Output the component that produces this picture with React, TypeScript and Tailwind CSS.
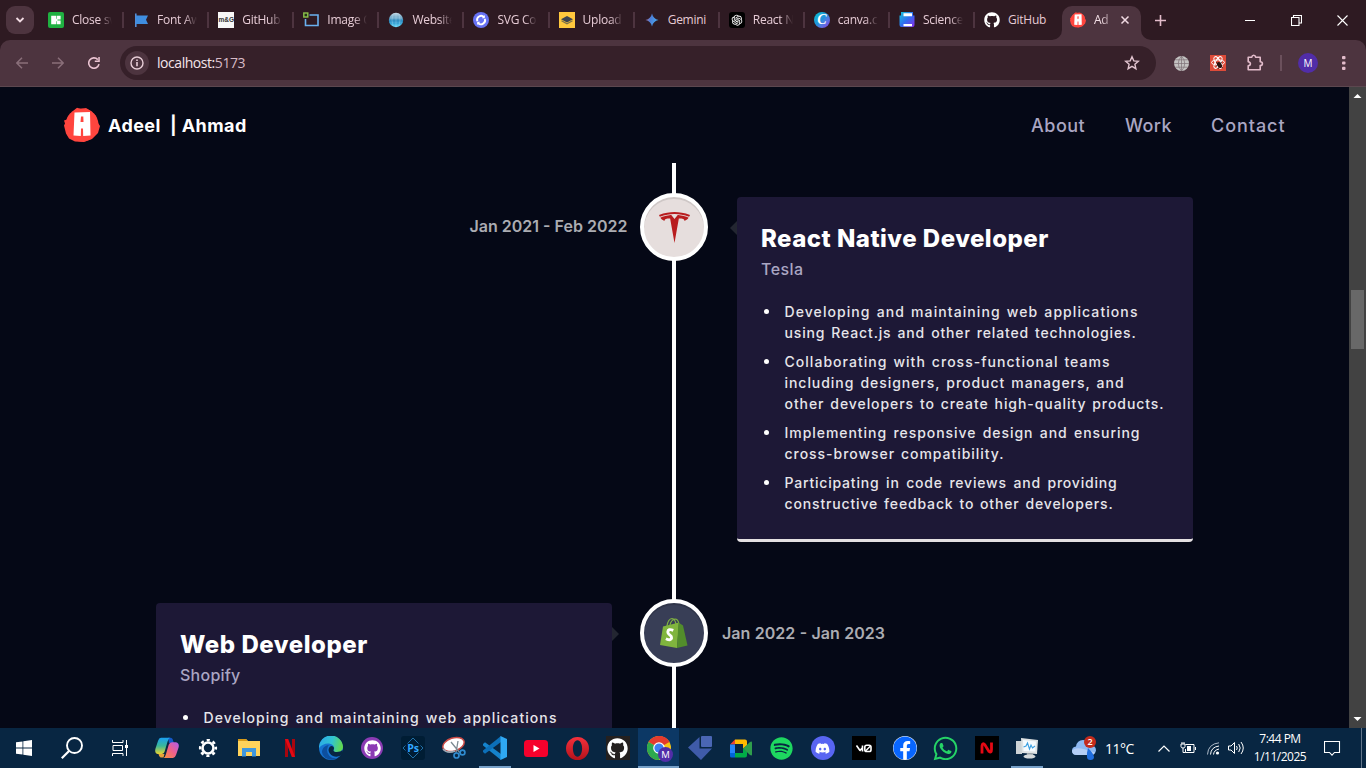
import React from "react";
import { FaGithub, FaSpotify, FaDiscord, FaWhatsapp, FaFacebook, FaYoutube } from "react-icons/fa";
import { AiOutlineOpenAI } from "react-icons/ai";
import { SiTesla } from "react-icons/si";

const AvatarLogo = ({ size }: { size: number }) => (
  <svg className="shrink-0" width={size} height={size} viewBox="0 0 36 36">
    <circle cx="18" cy="18" r="16.500" fill="#ff453e" />
    <path d="M9 4l4-3.300 4 1.300 5-1 5 3 5 5 2 7 2 3-2 7-6 6-8 3-9-.5-6-3-3-5-2-8 1-2-1-3 3-1 1-3z" fill="#ff453e" />
    <path fillRule="evenodd" d="M10.500 5.500L26 5 26.500 28.500 19.200 29 19 21.500 17 21.500 16.800 29 9.500 28.500zM17 9.500L16.500 15 19.500 15 19.300 9.500z" fill="#fff" />
  </svg>
);

const favicons = {
  icons8: (
    <svg width="16" height="16" viewBox="0 0 16 16">
      <rect width="16" height="16" rx="2" fill="#1fb141" />
      <path d="M3.200 3.700h4.800v8.600H3.200zM8.600 3.700h4v3.900h-4zM8.600 8.400h4v3.900h-4z" fill="#fff" />
      <path d="M8 6.800h1.500v2.400H8z" fill="#fff" />
    </svg>
  ),
  flag: (
    <svg width="16" height="16" viewBox="0 0 16 16">
      <path d="M2.800 1.500v13.500" stroke="#538dd7" strokeWidth="1.600" />
      <path d="M3 3.500h12l-2 4.300 2 4.200H3z" fill="#3f8ee0" />
    </svg>
  ),
  mg: (
    <span className="flex h-4 w-4 items-center justify-center bg-[#f7f7f7] font-['Liberation_Sans'] text-[6.500px] font-bold text-[#333]">m&amp;G</span>
  ),
  image: (
    <svg width="16" height="16" viewBox="0 0 16 16">
      <path d="M6.500 3h8.500v10.500H2.500V7" fill="none" stroke="#69b1f0" strokeWidth="1.600" />
      <rect x=".8" y="1" width="4" height="4" fill="#28341c" stroke="#8bc34a" strokeWidth="1.400" />
    </svg>
  ),
  globe: (
    <svg width="16" height="16" viewBox="0 0 16 16">
      <defs>
        <linearGradient id="orb" x1="0" x2="0" y1="0" y2="1">
          <stop offset="0" stopColor="#c5d6e2" />
          <stop offset=".4" stopColor="#5fa0c4" />
          <stop offset=".6" stopColor="#1c86c0" />
          <stop offset="1" stopColor="#6fe0ff" />
        </linearGradient>
      </defs>
      <circle cx="8" cy="8" r="7.200" fill="url(#orb)" />
      <path d="M2 6h12M1.500 10h13M8 1v14M5 2q-2 6 0 12M11 2q2 6 0 12" stroke="#bfeaff" strokeWidth=".3" fill="none" />
    </svg>
  ),
  svgc: (
    <svg width="16" height="16" viewBox="0 0 16 16">
      <circle cx="8" cy="8" r="8" fill="#6772f4" />
      <path d="M4.300 9.200A4 4 0 0 1 11 5.200M11.800 6.800A4 4 0 0 1 5 10.800" fill="none" stroke="#fff" strokeWidth="1.900" />
      <path d="M11.800 3v3.200H8.800zM4.200 13V9.800h3z" fill="#fff" />
    </svg>
  ),
  upload: (
    <svg width="16" height="16" viewBox="0 0 16 16">
      <rect width="16" height="16" fill="#ffc83d" />
      <path d="M8 4l6 3.200L8 10.400 2 7.200z" fill="#3c4450" />
      <path d="M2.500 8.700L8 11.800l5.500-3.100" fill="none" stroke="#7d7148" strokeWidth="1.200" />
    </svg>
  ),
  gemini: (
    <svg width="16" height="16" viewBox="0 0 16 16">
      <defs>
        <linearGradient id="gem" x1="0" x2="1" y1=".3" y2=".6">
          <stop offset="0" stopColor="#b0719a" />
          <stop offset=".4" stopColor="#4b7fd8" />
          <stop offset="1" stopColor="#46b0f2" />
        </linearGradient>
      </defs>
      <path d="M8 1.500C8.800 5 11 7.200 14.500 8 11 8.800 8.800 11 8 14.500 7.200 11 5 8.800 1.500 8 5 7.200 7.200 5 8 1.500z" fill="url(#gem)" />
    </svg>
  ),
  openai: (
    <span className="flex h-4 w-4 items-center justify-center rounded-[3px] bg-black text-white">
      <AiOutlineOpenAI size={14} />
    </span>
  ),
  canva: (
    <span className="flex h-4 w-4 items-center justify-center rounded-full bg-linear-to-br from-[#00c4cc] via-[#2390dc] to-[#7d2ae8] pb-px font-['Liberation_Serif'] text-[14px] leading-none font-bold text-white italic">C</span>
  ),
  science: (
    <svg width="16" height="16" viewBox="0 0 16 16">
      <defs>
        <linearGradient id="sci" x1="0" x2="1" y1="0" y2="1">
          <stop offset="0" stopColor="#16c8d8" />
          <stop offset=".5" stopColor="#2d6ff0" />
          <stop offset="1" stopColor="#8a2be8" />
        </linearGradient>
      </defs>
      <path d="M2 0h12v3.500h1.500v9.500q0 2-2 2H2.500Q.5 15 .5 13V3.500H2z" fill="url(#sci)" />
      <path d="M4.500 1.200h8.500v3H4.500zM4.500 12h8.500v2.300H4.500z" fill="#fff" />
    </svg>
  ),
  github: <FaGithub size={16} color="#fff" />,
};

const tabs: [React.ReactNode, string][] = [
  [favicons.icons8, "Close sv"],
  [favicons.flag, "Font Aw"],
  [favicons.mg, "GitHub"],
  [favicons.image, "Image C"],
  [favicons.globe, "Website"],
  [favicons.svgc, "SVG Con"],
  [favicons.upload, "Upload"],
  [favicons.gemini, "Gemini"],
  [favicons.openai, "React N"],
  [favicons.canva, "canva.c"],
  [favicons.science, "Science"],
  [favicons.github, "GitHub"],
];

function TabStrip() {
  return (
    <div className="flex h-10 items-start bg-[#2e1a22]">
      <div className="mt-1.5 ml-1.5 flex h-7 w-7 items-center justify-center rounded-[9px] bg-[#4d343f]">
        <svg width="10" height="10" viewBox="0 0 10 10">
          <path d="M1.500 3l3.500 3.500L8.500 3" fill="none" stroke="#f1dbe3" strokeWidth="1.800" />
        </svg>
      </div>
      <div className="ml-[5px] flex">
        {tabs.map(([icon, label], i) => (
          <div key={i} className="flex h-10 w-[85.100px] items-center pl-[9px]">
            <span className="h-4 w-4 shrink-0">{icon}</span>
            <span
              className={
                "ml-[8px] w-[40px] shrink-0 overflow-hidden text-[12px] tracking-[-0.250px] whitespace-nowrap text-[#e6cbd5] " +
                (label === "Gemini" || i === 11 ? "" : "[mask-image:linear-gradient(to_right,#000_68%,transparent_100%)]")
              }
            >
              {label}
            </span>
            {i < 11 && <span className="ml-auto h-4 w-[2px] bg-[#4d343f]" />}
          </div>
        ))}
      </div>
      <div className="relative mt-1.5 ml-[1.800px] flex h-[34px] w-[79px] items-center rounded-t-[10px] bg-[#4d343f] pb-1.5 pl-2">
        <svg className="absolute bottom-0 -left-[10px]" width="10" height="10"><path d="M10 0v10H0A10 10 0 0 0 10 0" fill="#4d343f" /></svg>
        <svg className="absolute -right-[10px] bottom-0" width="10" height="10"><path d="M0 0v10h10A10 10 0 0 1 0 0" fill="#4d343f" /></svg>
        <AvatarLogo size={16} />
        <span className="ml-2 w-4 overflow-hidden text-[12px] tracking-[-0.200px] text-[#f3dfe6] [mask-image:linear-gradient(to_right,#000_40%,#0006_100%)]">Ad</span>
        <svg className="ml-[10px]" width="10" height="10" viewBox="0 0 10 10"><path d="M1.500 1.500l7 7M8.500 1.500l-7 7" stroke="#f1dbe3" strokeWidth="1.500" /></svg>
      </div>
      <svg className="mt-[15px] ml-[14px]" width="11" height="11" viewBox="0 0 11 11"><path d="M5.500 0v11M0 5.500h11" stroke="#e3bccb" strokeWidth="1.600" /></svg>
      <div className="mt-[15px] ml-auto flex items-center gap-[35px] pr-[18px]">
        <svg width="11" height="11"><path d="M0 5.500h10" stroke="#fff" /></svg>
        <svg width="11" height="11"><path d="M.5 2.500h7.500v8H.5zM2.500 2.500v-2h8v7.500H8" fill="none" stroke="#fff" strokeWidth="1.100" /></svg>
        <svg width="11" height="11"><path d="M.5.5l10 10M10.500.5l-10 10" stroke="#fff" strokeWidth="1.100" /></svg>
      </div>
    </div>
  );
}

function Toolbar() {
  return (
    <div className="bg-[#2e1a22]">
      <div className="flex h-[47px] items-center rounded-t-[10px] border-b border-[#5c474f] bg-[#4d343f] pl-4">
        <svg width="12" height="12" viewBox="0 0 12 12"><path d="M12 6H1M6 .8L.8 6 6 11.200" fill="none" stroke="#8a6f7a" strokeWidth="1.500" /></svg>
        <svg className="ml-6" width="12" height="12" viewBox="0 0 12 12"><path d="M0 6h11M6 .8L11.200 6 6 11.200" fill="none" stroke="#8a6f7a" strokeWidth="1.500" /></svg>
        <svg className="ml-6" width="12" height="12" viewBox="0 0 12 12">
          <path d="M11 7.200A5.200 5.200 0 1 1 9.800 2.600" fill="none" stroke="#ebc4d2" strokeWidth="1.600" />
          <path d="M11.800 0v5H6.800V3.600h3.500V0z" fill="#ebc4d2" />
        </svg>
        <div className="ml-5 flex h-[34px] w-[1036px] items-center rounded-full bg-[#362029] pl-[5px]">
          <span className="flex h-6 w-6 items-center justify-center rounded-full bg-[#4d343f]">
            <svg width="14" height="14" viewBox="0 0 14 14">
              <circle cx="7" cy="7" r="6" fill="none" stroke="#e8ced7" strokeWidth="1.400" />
              <path d="M7 6v4.200M7 3.500v1.500" stroke="#e8ced7" strokeWidth="1.600" />
            </svg>
          </span>
          <span className="ml-2 pb-px text-[14px] tracking-[-0.450px] text-[#f4e4ea]">
            localhost:<span className="text-[#d7bbc6]">5173</span>
          </span>
          <svg className="mr-4 ml-auto" width="16" height="16" viewBox="0 0 16 16">
            <path d="M8 1.800l1.800 4.100 4.500.400-3.400 3 1 4.400L8 11.400l-3.900 2.300 1-4.400-3.400-3 4.500-.4z" fill="none" stroke="#e3c5d0" strokeWidth="1.400" />
          </svg>
        </div>
        <svg className="ml-[17px]" width="17" height="17" viewBox="0 0 17 17">
          <circle cx="8.500" cy="8.500" r="7.500" fill="#c4c3c2" />
          <path d="M1 8.500h15M2.500 4.800h12M2.500 12.200h12M8.500 1v15M8.500 1q-6.500 7.500 0 15M8.500 1q6.500 7.500 0 15" stroke="#7c7075" strokeWidth=".7" fill="none" />
        </svg>
        <svg className="ml-5" width="16" height="16" viewBox="0 0 16 16">
          <rect width="16" height="16" fill="#dd4b39" />
          <g fill="none" stroke="#fff" strokeWidth="1">
            <ellipse cx="8" cy="7.500" rx="6.500" ry="2.600" />
            <ellipse cx="8" cy="7.500" rx="6.500" ry="2.600" transform="rotate(60 8 7.500)" />
            <ellipse cx="8" cy="7.500" rx="6.500" ry="2.600" transform="rotate(120 8 7.500)" />
          </g>
          <ellipse cx="9.500" cy="10" rx="2.200" ry="3.200" fill="#2a1210" transform="rotate(-30 9.500 10)" />
          <path d="M6 7l7 6M6 11l6-4M8 14l3-6" stroke="#2a1210" strokeWidth=".7" />
        </svg>
        <svg className="ml-5" width="19" height="18" viewBox="0 0 19 18">
          <path d="M2.200 3.200h3.600q.2-1.900 1.900-1.900t1.900 1.900h4.600v4.600q2.200.2 2.200 1.900t-2.200 1.900v4.200H2.200v-4q2.200-.3 2.200-2t-2.200-2z" fill="none" stroke="#e3bccb" strokeWidth="1.600" strokeLinejoin="round" />
        </svg>
        <span className="ml-[15px] h-4 w-[2px] bg-[#6b505c]" />
        <span className="ml-4 flex h-5 w-5 items-center justify-center rounded-full bg-[#512da8] font-['Open_Sans'] text-[10px] text-white">M</span>
        <svg className="ml-6" width="4" height="16" viewBox="0 0 4 16"><g fill="#e3bccb"><rect y="1" width="3.500" height="3.200" rx="1" /><rect y="6.400" width="3.500" height="3.200" rx="1" /><rect y="11.800" width="3.500" height="3.200" rx="1" /></g></svg>
      </div>
    </div>
  );
}

const bulletLines: [string, string][][] = [
  [
    ["Developing and maintaining web applications", "w-[354px] tracking-[1.080px]"],
    ["using React.js and other related technologies.", "w-[352px] tracking-[0.850px]"],
  ],
  [
    ["Collaborating with cross-functional teams", "w-[326px] tracking-[1.030px]"],
    ["including designers, product managers, and", "w-[340px] tracking-[0.950px]"],
    ["other developers to create high-quality products.", "w-[380px] tracking-[0.930px]"],
  ],
  [
    ["Implementing responsive design and ensuring", "w-[356px] tracking-[0.950px]"],
    ["cross-browser compatibility.", "w-[220px] tracking-[0.970px]"],
  ],
  [
    ["Participating in code reviews and providing", "w-[333px] tracking-[0.800px]"],
    ["constructive feedback to other developers.", "w-[329px] tracking-[0.850px]"],
  ],
];

function Card({ title, titleClass, company, companyClass, arrow }: { title: string; titleClass: string; company: string; companyClass: string; arrow: "left" | "right" }) {
  return (
    <div className="relative mt-1 h-[345px] w-[456px] shrink-0 rounded-[4px] border-b-[3px] border-[#e4e0e2] bg-[#1d1836] px-6 pt-6">
      {arrow === "left" ? (
        <span className="absolute top-6 -left-[7px] h-0 w-0 border-y-[7px] border-r-[7px] border-y-transparent border-r-[#232631]" />
      ) : (
        <span className="absolute top-6 -right-[7px] h-0 w-0 border-y-[7px] border-l-[7px] border-y-transparent border-l-[#232631]" />
      )}
      <h3 className={"text-[24px] leading-9 font-extrabold whitespace-nowrap text-white " + titleClass}>{title}</h3>
      <p className={"text-[16px] leading-6 font-medium text-[#aaa6c3] " + companyClass}>{company}</p>
      <ul className="mt-5 flex flex-col gap-2">
        {bulletLines.map((lines, i) => (
          <li key={i} className="flex">
            <span className="mt-[8px] ml-[3px] h-[5px] w-[5px] shrink-0 rounded-full bg-white" />
            <div className="ml-[15.500px] text-[14px] leading-[21px] font-medium text-[#e6e5ea]">
              {lines.map(([text, fit]) => (
                <p key={text} className={"whitespace-nowrap [text-align-last:justify] " + fit}>{text}</p>
              ))}
            </div>
          </li>
        ))}
      </ul>
    </div>
  );
}

const ShopifyBag = () => (
  <svg width="28" height="32" viewBox="0 0 28 32">
    <path d="M7 9Q8 2 12 1.500q3 0 4 6M10 8q1-5 5-6 3 0 4 5" fill="none" stroke="#7fb241" strokeWidth="1.200" />
    <path d="M3 9.500L19 5.500 17 31 0 28z" fill="#80b53e" />
    <path d="M18.500 5.500l4.500 3L27.500 28.500 17 31z" fill="#528d2b" />
    <path d="M13.300 13.300q-5.300-2-5.500 1.800 0 1.800 2 3t1.800 3q-.5 3-5.700.600" fill="none" stroke="#fff" strokeWidth="2.900" />
  </svg>
);

function Page() {
  return (
    <div className="flex h-[641px] bg-[#050816] font-['Inter',sans-serif]">
      <main className="w-[1349px] overflow-hidden">
        <nav className="flex h-[76px] items-center pr-16 pl-16">
          <AvatarLogo size={36} />
          <span className="ml-2 w-[145px] text-[18px] font-bold tracking-[0.400px] whitespace-pre text-white">Adeel&nbsp; | Ahmad</span>
          <ul className="ml-auto flex gap-10 text-[18px] font-medium text-[#aaa6c3]">
            <li className="w-[54px] tracking-[0.500px]">About</li>
            <li className="w-[46px] tracking-[0.400px]">Work</li>
            <li className="w-[74px] tracking-[0.950px]">Contact</li>
          </ul>
        </nav>
        <section className="relative flex h-[565px] flex-col pt-[30px]">
          <span className="absolute top-0 left-[672px] h-full w-1 bg-white" />
          <div className="flex h-[406px] items-start">
            <p className="flex h-[66px] w-[627px] items-center justify-end text-[16px] font-semibold text-[#abacb2]"><span className="w-[157.500px] whitespace-nowrap [text-align-last:justify]">Jan 2021 - Feb 2022</span></p>
            <span className="relative ml-[13px] flex h-[68px] w-[68px] shrink-0 items-center justify-center rounded-full border-4 border-white bg-[#e6dedd] text-[#b81c1e] shadow-[inset_0_2px_0_#0000001a]">
              <SiTesla size={31} />
            </span>
            <div className="ml-[29px]">
              <Card title="React Native Developer" titleClass="tracking-[0.480px]" company="Tesla" companyClass="tracking-[0.450px]" arrow="left" />
            </div>
          </div>
          <div className="flex h-[129px] items-start overflow-hidden pl-[156px]">
            <Card title="Web Developer" titleClass="tracking-[0.550px]" company="Shopify" companyClass="tracking-[0.250px]" arrow="right" />
            <span className="relative ml-7 flex h-[68px] w-[68px] shrink-0 items-center justify-center rounded-full border-4 border-white bg-[#383e56] shadow-[inset_0_2px_0_#00000026]">
              <ShopifyBag />
            </span>
            <p className="ml-3.5 flex h-[68px] items-center text-[16px] font-semibold text-[#abacb2]"><span className="w-[163px] whitespace-nowrap [text-align-last:justify]">Jan 2022 - Jan 2023</span></p>
          </div>
        </section>
      </main>
      <div className="flex w-[17px] flex-col items-center bg-[#424242]">
        <svg width="17" height="17"><path d="M4.500 11h8l-4-4z" fill="#fff" /></svg>
        <span className="mt-[186px] h-[59px] w-[13px] bg-[#686868]" />
        <svg className="mt-auto" width="17" height="17"><path d="M4.500 6h8l-4 4z" fill="#fff" /></svg>
      </div>
    </div>
  );
}

const Chrome = () => (
  <svg width="28" height="28" viewBox="0 0 28 28">
    <circle cx="12" cy="12" r="12" fill="#f5c518" />
    <path d="M12 12L1.600 6A12 12 0 0 1 22.400 6z" fill="#e33b2e" />
    <path d="M12 0A12 12 0 0 1 22.400 6H12z" fill="#e33b2e" />
    <path d="M1.600 6A12 12 0 0 0 12 24l5.200-9L12 12z" fill="#2da94f" />
    <circle cx="12" cy="12" r="5.800" fill="#fff" />
    <circle cx="12" cy="12" r="4.600" fill="#3d7ff0" />
    <circle cx="18.500" cy="18.500" r="7.500" fill="#512da8" />
    <text x="18.500" y="22" textAnchor="middle" fontSize="9.500" fill="#fff" fontFamily="Open Sans">M</text>
  </svg>
);

const apps: React.ReactNode[] = [
  <svg width="24" height="22" viewBox="0 0 24 22">
    <defs>
      <linearGradient id="cpa" x1="0" x2="0" y1="0" y2="1"><stop offset="0" stopColor="#1a9ff0" /><stop offset=".5" stopColor="#3ab89a" /><stop offset="1" stopColor="#e8d431" /></linearGradient>
      <linearGradient id="cpb" x1="1" x2="0" y1="0" y2="1"><stop offset="0" stopColor="#b05cf0" /><stop offset=".5" stopColor="#f0608a" /><stop offset="1" stopColor="#f8913a" /></linearGradient>
    </defs>
    <path d="M13 .8h2.500q2 0 2.700 3.200l.8 2h-5z" fill="#1558c8" />
    <path d="M5.500 20.500q-1.500-.5-2-3.500h6l-1 3.500z" fill="#e8a13a" />
    <path d="M6 .8h9q-1.700 1-2.500 4L9.800 14q-.8 3-3.300 3H3Q-.8 16.500 .5 11.500L3 4Q4 .8 6 .8z" fill="url(#cpa)" />
    <path d="M18 21H8.500q1.700-1 2.500-4l2.700-9.200q.8-2.600 3.300-2.600H21q3.800 1 2.500 5.500L21 18q-1 3-3 3z" fill="url(#cpb)" />
  </svg>,
  <svg width="20" height="20" viewBox="0 0 20 20">
    <circle cx="10" cy="10" r="5.500" fill="none" stroke="#fff" strokeWidth="2.600" />
    <circle cx="10" cy="10" r="7.900" fill="none" stroke="#fff" strokeWidth="2.400" strokeDasharray="3.100 3.104" strokeDashoffset="1.550" />
  </svg>,
  <svg width="22" height="20" viewBox="0 0 22 20">
    <path d="M0 1h8l2 2h12v15H0z" fill="#ffd35b" /><path d="M0 1h8l1.500 2H0z" fill="#d99b18" />
    <path d="M4 10h14v8.500h-4V14H8v4.500H4z" fill="#3f97dd" />
  </svg>,
  <svg width="10" height="18" viewBox="0 0 10 18"><path d="M0 0h3v18H0zM7 0h3v18H7z" fill="#a8060f" /><path d="M0 0h3.200L10 18H6.800z" fill="#e50914" /></svg>,
  <svg width="24" height="24" viewBox="0 0 24 24">
    <defs>
      <linearGradient id="eda" x1="0" x2="1" y1=".2" y2=".4"><stop offset="0" stopColor="#2ba9e8" /><stop offset=".55" stopColor="#31c4d0" /><stop offset="1" stopColor="#62d94e" /></linearGradient>
    </defs>
    <circle cx="12" cy="12" r="12" fill="#1673d0" />
    <path d="M0 12A12 12 0 0 1 24 11q0 5-6 5-4 0-3.500-2 1-1 .5-3-1-3-5-3.500Q4 7 0 12z" fill="url(#eda)" />
    <path d="M8.500 12q-1.500 4 2 8 3 3 8 2-6 3.500-12 0-5-4-3-8.500Q5 9.500 10 9q-1.500 1-1.500 3z" fill="#0d4f9e" />
    <path d="M14.500 14q-.5 2 3.500 2 4 0 5.500-2l.5 3-2 2.500q-4 2-8 .5-4-2-4.500-6 .5-4 3.500-4 3 1 1.500 4z" fill="#082642" />
  </svg>,
  <span className="flex h-[22px] w-[22px] items-center justify-center rounded-full bg-[#8b3bb4]"><FaGithub size={17} color="#fff" /></span>,
  <svg width="24" height="24" viewBox="0 0 24 24">
    <rect width="24" height="24" rx="3" fill="#001d34" />
    <path d="M12 2l10 10-10 10L2 12z" fill="none" stroke="#2070a8" strokeWidth="1" />
    <path d="M4.500 7.500h15v9h-15z" fill="#001d34" />
    <text x="12.200" y="16" textAnchor="middle" fontSize="10.500" fontWeight="700" fill="#31a8ff" fontFamily="Open Sans">Ps</text>
  </svg>,
  <svg width="24" height="24" viewBox="0 0 24 24">
    <ellipse cx="11.500" cy="8.500" rx="11" ry="6.500" transform="rotate(-18 11.500 8.500)" fill="#fff" stroke="#c94a45" strokeWidth="1.500" />
    <path d="M1 13q4 5 12 2" stroke="#9aa8b4" strokeWidth="1.500" fill="none" />
    <path d="M9 6l9 11M16 5l-2 12" stroke="#7d8a92" strokeWidth="1.300" />
    <circle cx="14.500" cy="19.500" r="2.500" fill="none" stroke="#2f8bd0" strokeWidth="1.700" /><circle cx="20.500" cy="16.500" r="2.400" fill="none" stroke="#2f8bd0" strokeWidth="1.700" />
  </svg>,
  <svg width="24" height="24" viewBox="0 0 24 24">
    <path d="M0 8l2-1.700L18 18v6L0 9.500z" fill="#1583cc" />
    <path d="M0 16l2 1.700L18 6V0L0 14.500z" fill="#0c6fb8" />
    <path d="M17.500 0L24 3v18l-6.500 3z" fill="#2fa8f2" />
  </svg>,
  <svg width="24" height="17" viewBox="0 0 24 17"><rect width="24" height="17" rx="3.500" fill="#f6012c" /><path d="M9.500 5v7l6-3.500z" fill="#fff" /></svg>,
  <svg width="23" height="23" viewBox="0 0 24 24">
    <defs><linearGradient id="opr" x1="0" x2="0" y1="0" y2="1"><stop offset="0" stopColor="#f5313c" /><stop offset="1" stopColor="#b3121b" /></linearGradient></defs>
    <path fillRule="evenodd" d="M12 0a12 12 0 1 0 0 24 12 12 0 1 0 0-24zM12 3.500c3 0 4.800 4 4.800 8.500S15 20.500 12 20.500 7.200 16.500 7.200 12 9 3.500 12 3.500z" fill="url(#opr)" />
  </svg>,
  <span className="flex h-6 w-6 items-center justify-center bg-[#24201f]"><FaGithub size={21} color="#fff" /></span>,
  <span className="mt-1 ml-1"><Chrome /></span>,
  <svg width="24" height="24" viewBox="0 0 24 24"><path d="M11.500 1v11.500H24L13 24 0 11.500z" fill="#3f5ba9" /><rect x="13" y="0" width="11" height="11" rx="1" fill="#4a66b4" /></svg>,
  <svg width="22" height="19" viewBox="0 0 22 19">
    <path d="M5 .5h10q2 0 2 2v4l-4 3V5H5z" fill="#ffba00" /><path d="M5 .5V5.500H0z" fill="#ea4335" />
    <path d="M0 5.500h5v8.500H0z" fill="#2684fc" /><path d="M0 14h5v4.500H1.500Q0 18.500 0 17z" fill="#0066da" />
    <path d="M5 14h8V9.500l4 3V16.500q0 2-2 2H5z" fill="#00ac47" /><path d="M13 9.500L20 3q2-1 2 .5v12q0 1.500-2 .5z" fill="#2f9e4c" />
  </svg>,
  <FaSpotify size={23} color="#1ed760" />,
  <span className="flex h-6 w-6 items-center justify-center rounded-full bg-[#5865f2]"><FaDiscord size={15} color="#fff" /></span>,
  <span className="flex h-6 w-6 items-center justify-center bg-black">
    <svg width="16" height="9" viewBox="0 0 16 9"><path d="M.5 1.500L4 6.500M3.600 7l3-3.500M6.500 1.500v6" fill="none" stroke="#fff" strokeWidth="1.600" /><rect x="8.800" y="1.300" width="6.200" height="6.200" rx="1.800" fill="none" stroke="#fff" strokeWidth="1.600" /><path d="M9.500 7l5-5" stroke="#fff" strokeWidth="1.400" /></svg>
  </span>,
  <span className="flex h-6 w-6 items-center justify-center rounded-full bg-white"><FaFacebook size={24} color="#0866ff" /></span>,
  <FaWhatsapp size={27} color="#25d366" />,
  <span className="flex h-6 w-6 items-center justify-center bg-black">
    <svg width="14" height="14" viewBox="0 0 14 14"><path d="M2 12.500V5q.5-4 3-1l4 6.500q2.500 2 2.500-2V1.500" fill="none" stroke="#e50914" strokeWidth="2.800" /></svg>
  </span>,
  <svg width="24" height="22" viewBox="0 0 24 22">
    <path d="M1 4h6v13H1z" fill="#cdd3d6" /><path d="M6 1l17 2-1 14-15-1z" fill="#dfe3e4" /><path d="M8 3l13 1.500-.8 10L8.500 14z" fill="#f6fbff" />
    <path d="M8.500 10l2.500-1 1.500-3 2 6 1.500-4 1.500 3 2.500-2" fill="none" stroke="#3b9fe0" strokeWidth="1.100" />
    <path d="M12 16l6 .5.500 2.500h-7z" fill="#a4acb0" /><ellipse cx="14.500" cy="19.500" rx="6" ry="2" fill="#d5dadc" />
  </svg>,
];

function Taskbar() {
  return (
    <div className="flex h-10 items-center overflow-hidden bg-[#082642] text-white">
      <svg className="ml-4 shrink-0" width="16" height="16" viewBox="0 0 16 16"><path d="M0 2.300L6.500 1.400v6.200H0zM7.300 1.300L16 0v7.600H7.300zM0 8.400h6.500v6.200L0 13.700zM7.300 8.400H16V16l-8.700-1.300z" fill="#fff" /></svg>
      <svg className="ml-[29px] shrink-0" width="22" height="22" viewBox="0 0 22 22"><circle cx="13.500" cy="8.500" r="7.500" fill="none" stroke="#fff" strokeWidth="1.900" /><path d="M8 14L.8 21.200" stroke="#fff" strokeWidth="2.200" /></svg>
      <svg className="ml-[29px] shrink-0" width="17" height="16" viewBox="0 0 17 16"><path d="M.5 0v2.500h10.500V0M.5 16v-2.500h10.500V16M1 5.500h9.500v5H1zM14.500 0v16" fill="none" stroke="#fff" /><path d="M13 5h3v3h-3z" fill="#fff" /></svg>
      <div className="ml-[18px] flex h-10 shrink-0">
        {apps.map((icon, i) => (
          <div key={i} className={"relative flex h-10 w-[40.960px] shrink-0 items-center justify-center " + (i === 12 ? "bg-[#0c3865]" : "")}>
            {icon}
            {(i === 8 || i === 21) && <span className="absolute bottom-0 h-[2px] w-8 bg-[#76a0c8]" />}
            {i === 12 && <span className="absolute bottom-0 h-[2px] w-full bg-[#76a0c8]" />}
          </div>
        ))}
      </div>
      <svg className="ml-[24px] shrink-0" width="25" height="25" viewBox="0 0 25 25">
        <path d="M5 19Q0 19 0 14.500 0 11 4 10.500 5 4 11 4q5 0 6.500 5Q24 9 24 14.500 23 19 19 19z" fill="#8db8f2" />
        <path d="M5 19Q0 19 0 14.500q3-3 9-2t14 4Q22 19 19 19z" fill="#b4cef6" />
        <path d="M16 12q6 6 6 9 0 3-3.500 3T15 21q-.5-4 1-9z" fill="#1f6ee0" />
        <circle cx="18" cy="6" r="6" fill="#c42b1c" />
        <text x="18" y="9.200" fontSize="9" textAnchor="middle" fill="#fff" fontFamily="Open Sans" fontWeight="600">2</text>
      </svg>
      <span className="ml-2 w-[31px] text-[14px] tracking-[-0.500px] whitespace-nowrap">11°C</span>
      <svg className="ml-[22px] shrink-0" width="12" height="7"><path d="M.5 6.500L6 1l5.500 5.500" fill="none" stroke="#fff" strokeWidth="1.200" /></svg>
      <svg className="ml-[10px] shrink-0" width="16" height="14" viewBox="0 0 16 14"><path d="M5.500 3.500H14v8H5.500V8M15.500 6v3M3 7v4.500h2.500M1 3h4v2.500q0 1.500-2 1.500T1 5.500zM2 1v2M4 1v2" fill="none" stroke="#fff" /><path d="M7 5h4v5H7z" fill="#fff" /></svg>
      <svg className="ml-[11px] shrink-0" width="13" height="13" viewBox="0 0 13 13"><g fill="none" stroke="#fff" strokeWidth="1"><path d="M.5 12.500Q1 2 12 .8" stroke="#aebac8" /><path d="M3.500 12.500Q4 5 12 4" /><path d="M6.500 12.500Q7 8 12 7" /></g><circle cx="10.500" cy="11" r="1.600" fill="#fff" /></svg>
      <svg className="ml-2 shrink-0" width="17" height="14" viewBox="0 0 17 14"><path d="M.5 5h2.500l3.500-3.500v11L3 9H.500z" fill="none" stroke="#fff" /><path d="M8.500 5q1.500 2 0 4M10.700 3q3 4 0 8M13 1q4.500 6 0 12" fill="none" stroke="#fff" /></svg>
      <div className="ml-1.5 flex w-[58px] shrink-0 flex-col items-center text-[12px] leading-[18px] tracking-[-0.500px] whitespace-nowrap">
        <span>7:44 PM</span>
        <span>1/11/2025</span>
      </div>
      <svg className="ml-[15px] shrink-0" width="17" height="17" viewBox="0 0 17 17"><path d="M.5 1.500h15v11h-5L8 15.200l-2.500-2.700h-5z" fill="none" stroke="#fff" strokeWidth="1.100" /></svg>
      <span className="mr-1 ml-auto h-10 w-px bg-[#62758a]" />
    </div>
  );
}

export default function App() {
  return (
    <div className="flex h-[768px] w-[1366px] flex-col overflow-hidden font-['Open_Sans',sans-serif]">
      <TabStrip />
      <Toolbar />
      <Page />
      <Taskbar />
    </div>
  );
}
